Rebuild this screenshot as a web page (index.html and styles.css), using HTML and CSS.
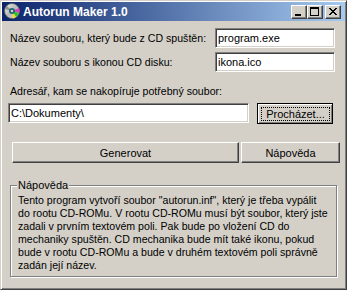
FILE: index.html
```html
<!DOCTYPE html>
<html lang="cs">
<head>
    <meta charset="UTF-8">
    <meta name="viewport" content="width=device-width, initial-scale=1.0">
    <title>Autorun Maker 1.0</title>
    <link rel="stylesheet" href="styles.css">
</head>
<body>

    <div class="window">
        <div class="titlebar">
            <svg class="app-icon" width="16" height="16" viewBox="0 0 16 16">
                <defs>
                    <linearGradient id="shine" x1="0" y1="0" x2="1" y2="1">
                        <stop offset="0" stop-color="#f0f0f0"/>
                        <stop offset="0.5" stop-color="#b8b8b8"/>
                        <stop offset="1" stop-color="#e0e0e0"/>
                    </linearGradient>
                </defs>
                <circle cx="8" cy="8" r="7.5" fill="url(#shine)" stroke="#606060" stroke-width="0.8"/>
                <path d="M8 8 L15 5 A7.5 7.5 0 0 1 15 10 Z" fill="#e040c0"/>
                <path d="M8 8 L15 10 A7.5 7.5 0 0 1 12 14 Z" fill="#30c030"/>
                <path d="M8 8 L12 14 A7.5 7.5 0 0 1 9 15.4 Z" fill="#f0e020"/>
                <path d="M8 8 L1 6 A7.5 7.5 0 0 1 3 3 Z" fill="#909090"/>
                <circle cx="8" cy="8" r="3" fill="#1a6a70"/>
                <circle cx="8" cy="8" r="1.2" fill="#d0d0d0"/>
            </svg>
            <span class="title">Autorun Maker 1.0</span>
            <div class="caption-buttons">
                <button class="cap-btn" title="Minimalizovat">
                    <svg width="16" height="14" viewBox="0 0 16 14"><rect x="4" y="9" width="6" height="2"/></svg>
                </button>
                <button class="cap-btn" title="Maximalizovat">
                    <svg width="16" height="14" viewBox="0 0 16 14"><path fill-rule="evenodd" d="M3 2h9v9H3z M4 4v6h7V4z"/></svg>
                </button>
                <button class="cap-btn close" title="Zavřít">
                    <svg width="16" height="14" viewBox="0 0 16 14">
                        <path d="M4 3h2v1H4z M10 3h2v1h-2z M5 4h2v1H5z M9 4h2v1H9z M6 5h4v1H6z M7 6h2v1H7z M6 7h4v1H6z M5 8h2v1H5z M9 8h2v1H9z M4 9h2v1H4z M10 9h2v1h-2z"/>
                    </svg>
                </button>
            </div>
        </div>

        <div class="client">
            <div class="row">
                <label for="exeName">Název souboru, který bude z CD spuštěn:</label>
                <input type="text" id="exeName" class="field field-short" value="program.exe">
            </div>
            <div class="row row-next">
                <label for="iconName">Název souboru s ikonou CD disku:</label>
                <input type="text" id="iconName" class="field field-short" value="ikona.ico">
            </div>

            <label class="dir-label" for="dirName">Adresář, kam se nakopíruje potřebný soubor:</label>
            <div class="row row-dir">
                <input type="text" id="dirName" class="field field-dir" value="C:\Dokumenty\">
                <button class="btn btn-default"><span class="focus">Procházet...</span></button>
            </div>

            <div class="row-actions">
                <button class="btn btn-generate">Generovat</button>
                <button class="btn btn-help">Nápověda</button>
            </div>

            <div class="group">
                <span class="group-title">Nápověda</span>
                <p class="help-text">Tento program vytvoří soubor "autorun.inf", který je třeba vypálit<br>do rootu CD-ROMu. V rootu CD-ROMu musí být soubor, který jste<br>zadali v prvním textovém poli. Pak bude po vložení CD do<br>mechaniky spuštěn. CD mechanika bude mít také ikonu, pokud<br>bude v rootu CD-ROMu a bude v druhém textovém poli správně<br>zadán její název.</p>
            </div>
        </div>
    </div>

</body>
</html>
```
FILE: styles.css
```css
body {
    margin: 0;
    font-family: "Liberation Sans", Arial, sans-serif;
    font-size: 11px;
    color: #000;
}
.window {
    width: 347px;
    height: 290px;
    box-sizing: border-box;
    padding: 1px;
    background-color: #d4d0c8;
    border: 1px solid;
    border-color: #d4d0c8 #404040 #404040 #d4d0c8;
    box-shadow: inset 1px 1px #fff, inset -1px -1px #808080;
    display: flex;
    flex-direction: column;
}
.titlebar {
    height: 19px;
    display: flex;
    align-items: center;
    padding: 0 4px 0 2px;
    background: linear-gradient(to right, #0a246a, #a6caf0);
    color: #fff;
}
.app-icon {
    display: block;
    margin-top: -1px;
}
.title {
    margin-left: 3px;
    font-size: 12px;
    font-weight: bold;
    white-space: nowrap;
}
.caption-buttons {
    margin-left: auto;
    display: flex;
}
.cap-btn {
    width: 16px;
    height: 14px;
    padding: 0;
    border: 1px solid;
    border-color: #fff #404040 #404040 #fff;
    box-shadow: inset -1px -1px #808080, inset 1px 1px #d4d0c8;
    background-color: #d4d0c8;
    box-sizing: border-box;
    position: relative;
}
.cap-btn svg {
    position: absolute;
    left: -1px;
    top: -1px;
    shape-rendering: crispEdges;
}
.cap-btn.close {
    margin-left: 2px;
}
.client {
    flex: 1;
    padding: 7px 8px 0 8px;
}
.row {
    display: flex;
    align-items: center;
    justify-content: space-between;
    margin-right: 2px;
}
.row label,
.dir-label,
.help-text {
    font-size: 10.6px;
}
.row-next {
    margin-top: 4px;
}
.field {
    height: 20px;
    box-sizing: border-box;
    padding: 0 2px;
    font: inherit;
    color: #000;
    background-color: #fff;
    border: 1px solid;
    border-color: #808080 #fff #fff #808080;
    box-shadow: inset 1px 1px #404040, inset -1px -1px #d4d0c8;
    outline: none;
}
.field-short {
    width: 120px;
}
.dir-label {
    display: block;
    margin-top: 13px;
    line-height: 13px;
}
.row-dir {
    margin-top: 5px;
    margin-left: -2px;
    margin-right: 4px;
    align-items: flex-start;
}
.field-dir {
    width: 241px;
}
.btn {
    height: 21px;
    box-sizing: border-box;
    padding: 0;
    font: inherit;
    color: #000;
    background-color: #d4d0c8;
    border: 1px solid;
    border-color: #fff #404040 #404040 #fff;
    box-shadow: inset -1px -1px #808080, inset 1px 1px #d4d0c8;
}
.btn-default {
    width: 76px;
    padding: 3px 2px 2px 3px;
    border-color: #000;
    box-shadow: inset 1px 1px #fff, inset -1px -1px #808080;
}
.btn-default .focus {
    display: block;
    height: 100%;
    box-sizing: border-box;
    line-height: 13px;
    border: 1px dotted #000;
}
.row-actions {
    display: flex;
    gap: 2px;
    margin: 18px -3px 0 2px;
}
.btn-generate {
    flex: 1;
}
.btn-help {
    width: 99px;
}
.group {
    position: relative;
    margin-top: 22px;
    padding: 8px 4px 4px 7px;
    border: 1px solid #808080;
    box-shadow: inset 1px 1px #fff, 1px 1px #fff;
}
.group-title {
    position: absolute;
    top: -7px;
    left: 6px;
    padding: 0 1px;
    line-height: 13px;
    background-color: #d4d0c8;
}
.help-text {
    margin: 0;
    line-height: 13px;
    white-space: nowrap;
}
```
